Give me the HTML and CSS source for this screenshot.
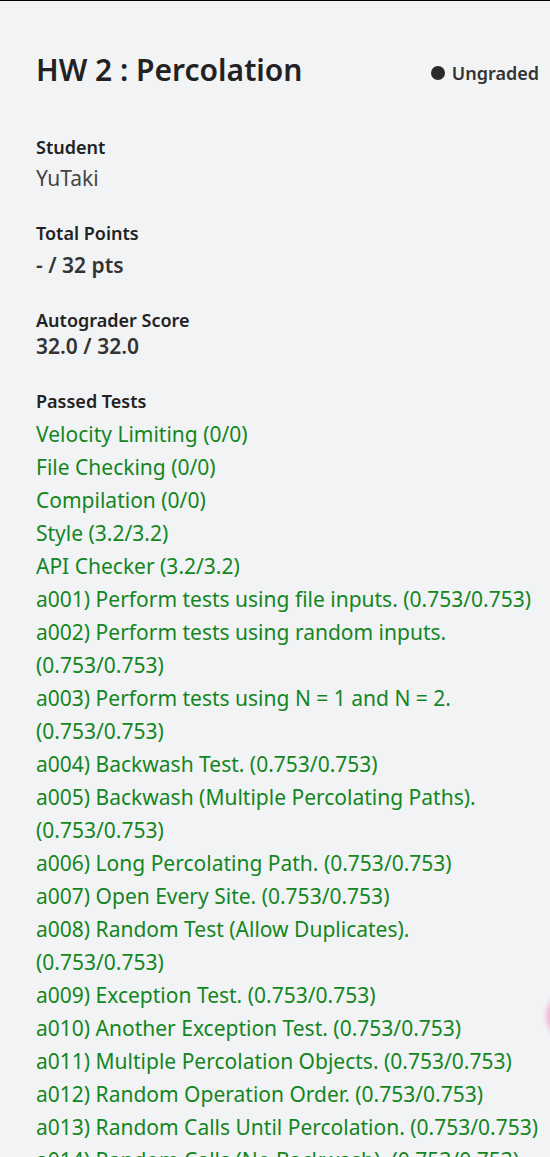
FILE: index.html
```html
<!DOCTYPE html>
<html lang="en">
<head>
<meta charset="utf-8">
<title>HW 2 : Percolation</title>
<link rel="stylesheet" href="styles.css">
</head>
<body>
<div class="page">
  <header class="header">
    <h1 class="title">HW 2 : Percolation</h1>
    <div class="status"><span class="dot"></span><span>Ungraded</span></div>
  </header>

  <section class="field">
    <div class="label">Student</div>
    <div class="value value-light">YuTaki</div>
  </section>

  <section class="field">
    <div class="label">Total Points</div>
    <div class="value value-strong">- / 32 pts</div>
  </section>

  <section class="field">
    <div class="label">Autograder Score</div>
    <div class="value value-strong value-tight">32.0 / 32.0</div>
  </section>

  <section class="field">
    <div class="label">Passed Tests</div>
    <ul class="tests">
      <li>Velocity Limiting (0/0)</li>
      <li>File Checking (0/0)</li>
      <li>Compilation (0/0)</li>
      <li>Style (3.2/3.2)</li>
      <li>API Checker (3.2/3.2)</li>
      <li>a001) Perform tests using file inputs. (0.753/0.753)</li>
      <li>a002) Perform tests using random inputs. (0.753/0.753)</li>
      <li>a003) Perform tests using N = 1 and N = 2. (0.753/0.753)</li>
      <li>a004) Backwash Test. (0.753/0.753)</li>
      <li>a005) Backwash (Multiple Percolating Paths). (0.753/0.753)</li>
      <li>a006) Long Percolating Path. (0.753/0.753)</li>
      <li>a007) Open Every Site. (0.753/0.753)</li>
      <li>a008) Random Test (Allow Duplicates). (0.753/0.753)</li>
      <li>a009) Exception Test. (0.753/0.753)</li>
      <li>a010) Another Exception Test. (0.753/0.753)</li>
      <li>a011) Multiple Percolation Objects. (0.753/0.753)</li>
      <li>a012) Random Operation Order. (0.753/0.753)</li>
      <li>a013) Random Calls Until Percolation. (0.753/0.753)</li>
      <li>a014) Random Calls (No Backwash). (0.753/0.753)</li>
    </ul>
  </section>
</div>
<div class="fab"></div>
</body>
</html>
```
FILE: styles.css
```css
html, body {
  margin: 0;
  padding: 0;
}
body {
  background: #f2f3f5;
  border-top: 1px solid #000;
  font-family: "Noto Sans", "Open Sans", sans-serif;
  color: #222;
  overflow: hidden;
  height: 1156px;
  position: relative;
}
.page {
  padding: 49px 11px 0 36px;
}
.header {
  display: flex;
  align-items: center;
  justify-content: space-between;
  margin-bottom: 45px;
}
.title {
  margin: 0;
  font-size: 30px;
  font-weight: 600;
  line-height: 40px;
  color: #222;
}
.status {
  display: flex;
  align-items: center;
  gap: 7px;
  font-size: 18px;
  font-weight: 600;
  color: #333;
  margin-top: 6px;
}
.dot {
  width: 14px;
  height: 14px;
  border-radius: 50%;
  background: #2a2a2a;
}
.field {
  margin-bottom: 27px;
}
.label {
  font-size: 18px;
  font-weight: 600;
  line-height: 24px;
  color: #222;
}
.value {
  font-size: 21px;
  line-height: 32px;
}
.value-light {
  color: #444;
  margin-top: 3px;
}
.value-strong {
  font-weight: 600;
  color: #333;
  margin-top: 4px;
}
.value-tight {
  margin-top: -2px;
}
.tests {
  list-style: none;
  margin: 5px 0 0;
  padding: 0;
}
.tests li {
  font-size: 21px;
  line-height: 33px;
  color: #14861f;
}
.fab {
  position: absolute;
  right: -46px;
  top: 990px;
  width: 50px;
  height: 50px;
  border-radius: 50%;
  background: #f6b6d4;
  filter: blur(2px);
}
```
